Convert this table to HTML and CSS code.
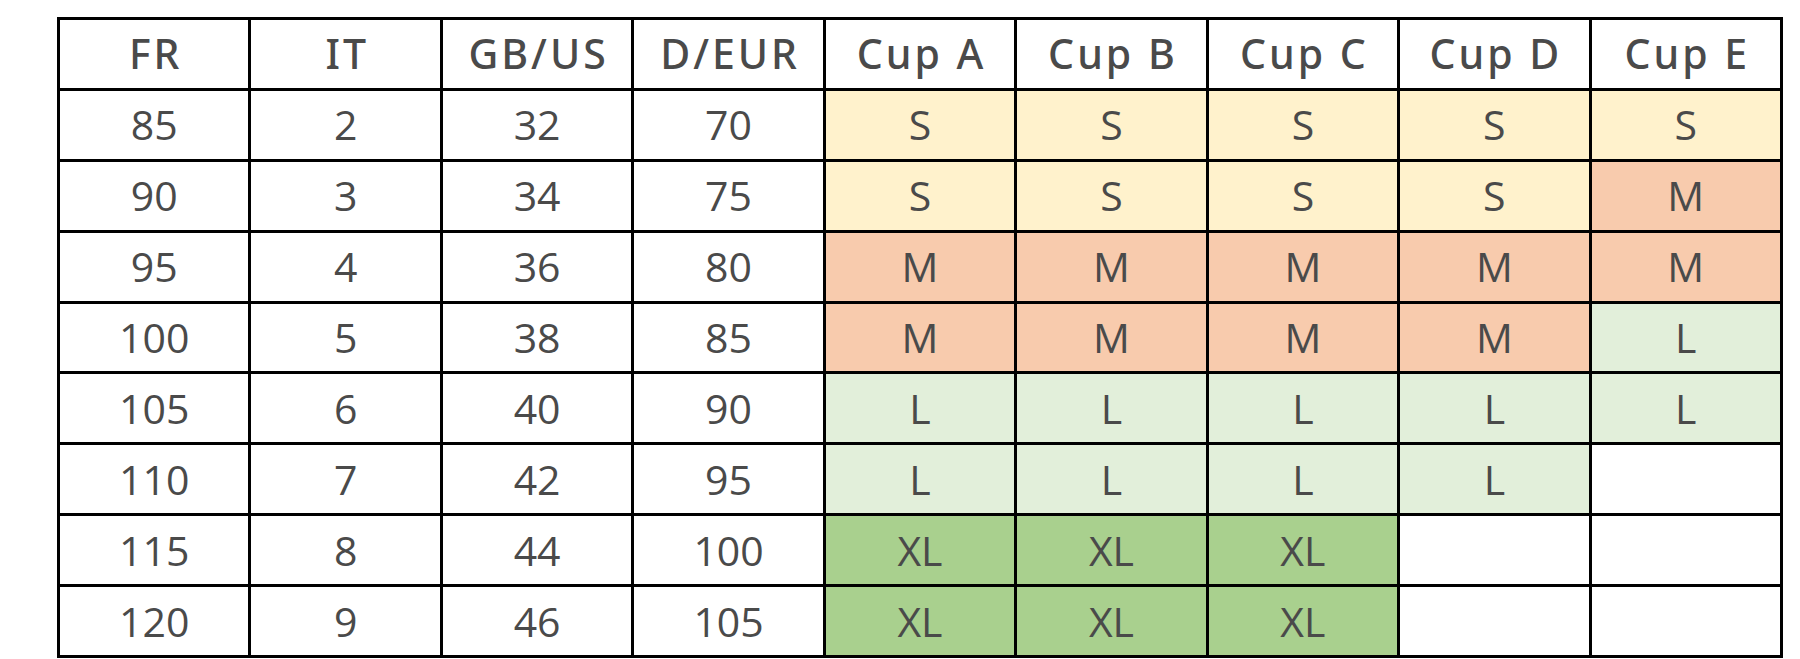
FILE: index.html
```html
<!DOCTYPE html>
<html>
<head>
<meta charset="utf-8">
<link rel="stylesheet" href="styles.css">
</head>
<body>
<div class="chart">
  <div class="cell head">FR</div><div class="cell head">IT</div><div class="cell head">GB/US</div><div class="cell head">D/EUR</div><div class="cell head">Cup A</div><div class="cell head">Cup B</div><div class="cell head">Cup C</div><div class="cell head">Cup D</div><div class="cell head">Cup E</div>

  <div class="cell">85</div><div class="cell">2</div><div class="cell">32</div><div class="cell">70</div><div class="cell s">S</div><div class="cell s">S</div><div class="cell s">S</div><div class="cell s">S</div><div class="cell s">S</div>

  <div class="cell">90</div><div class="cell">3</div><div class="cell">34</div><div class="cell">75</div><div class="cell s">S</div><div class="cell s">S</div><div class="cell s">S</div><div class="cell s">S</div><div class="cell m">M</div>

  <div class="cell">95</div><div class="cell">4</div><div class="cell">36</div><div class="cell">80</div><div class="cell m">M</div><div class="cell m">M</div><div class="cell m">M</div><div class="cell m">M</div><div class="cell m">M</div>

  <div class="cell">100</div><div class="cell">5</div><div class="cell">38</div><div class="cell">85</div><div class="cell m">M</div><div class="cell m">M</div><div class="cell m">M</div><div class="cell m">M</div><div class="cell l">L</div>

  <div class="cell">105</div><div class="cell">6</div><div class="cell">40</div><div class="cell">90</div><div class="cell l">L</div><div class="cell l">L</div><div class="cell l">L</div><div class="cell l">L</div><div class="cell l">L</div>

  <div class="cell">110</div><div class="cell">7</div><div class="cell">42</div><div class="cell">95</div><div class="cell l">L</div><div class="cell l">L</div><div class="cell l">L</div><div class="cell l">L</div><div class="cell"></div>

  <div class="cell">115</div><div class="cell">8</div><div class="cell">44</div><div class="cell">100</div><div class="cell xl">XL</div><div class="cell xl">XL</div><div class="cell xl">XL</div><div class="cell"></div><div class="cell"></div>

  <div class="cell">120</div><div class="cell">9</div><div class="cell">46</div><div class="cell">105</div><div class="cell xl">XL</div><div class="cell xl">XL</div><div class="cell xl">XL</div><div class="cell"></div><div class="cell"></div>
</div>
</body>
</html>
```
FILE: styles.css
```css
html, body {
  margin: 0;
  padding: 0;
  background: #ffffff;
}

body {
  padding: 17px 0 0 57px;
}

.chart {
  display: grid;
  grid-template-columns: repeat(9, 1fr);
  grid-template-rows: repeat(9, 1fr);
  gap: 3px;
  padding: 3px;
  width: 1726px;
  height: 641px;
  box-sizing: border-box;
  background: #000000;
}

.cell {
  display: flex;
  align-items: center;
  justify-content: center;
  background: #ffffff;
  color: #4a4a4a;
  font-family: "Open Sans", "Noto Sans", sans-serif;
  font-size: 41px;
  font-weight: 400;
  line-height: 1;
}

.head {
  font-family: "Noto Sans", "Open Sans", sans-serif;
  font-weight: 500;
  letter-spacing: 3px;
  padding-left: 3px;
}

.s { background: #fff2cc; }
.m { background: #f8cbad; }
.l { background: #e2efda; }
.xl { background: #a9d08e; }
```
